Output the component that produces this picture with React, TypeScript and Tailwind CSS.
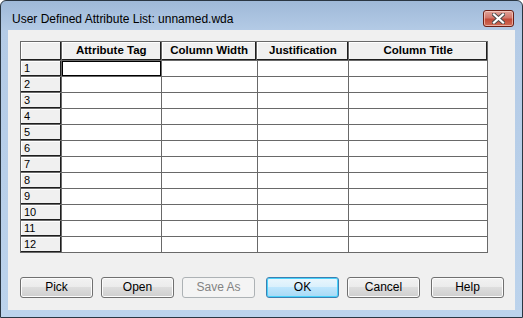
import React from 'react';

const cols = [
  { title: '', w: 'w-[41px]' },
  { title: 'Attribute Tag', w: 'w-[100px]' },
  { title: 'Column Width', w: 'w-[96px]' },
  { title: 'Justification', w: 'w-[92px]' },
  { title: 'Column Title', w: 'w-[139px]' },
];

const rows = Array.from({ length: 12 }, (_, i) => i + 1);

const Button: React.FC<{ label: string; kind?: 'normal' | 'default' | 'disabled' }> = ({ label, kind = 'normal' }) => {
  const styles = {
    normal:
      'border-[#707070] bg-[linear-gradient(#f2f2f2_0%,#ebebeb_50%,#dddddd_50%,#cfcfcf_100%)] text-black shadow-[inset_0_0_0_1px_#fcfcfc]',
    default:
      'border-[#3c7fb1] bg-[linear-gradient(#eaf6fd_0%,#d9f0fc_50%,#bee6fd_50%,#a7d9f5_100%)] text-black shadow-[inset_0_0_0_1px_#48d2fb]',
    disabled: 'border-[#adb2b5] bg-[#f4f4f4] text-[#838383]',
  }[kind];
  return (
    <div
      className={`w-[73px] h-[21px] rounded-[3px] border flex items-center justify-center pb-[2px] text-[12px] leading-none ${styles}`}
    >
      {label}
    </div>
  );
};

const App: React.FC = () => {
  return (
    <div className="w-[523px] h-[318px] font-['Liberation_Sans',Arial,sans-serif] bg-white">
      <div className="w-full h-full rounded-t-[6px] border border-[#2a3642] bg-[linear-gradient(#9fb9d8_0px,#b4cbe6_30px,#bcd3ec_100%)] px-[7px] pb-[7px] flex flex-col">
        {/* Title bar */}
        <div className="h-[29px] flex items-start justify-between shrink-0">
          <div className="pl-[4px] pt-[12px] text-[12px] leading-none text-black">
            User Defined Attribute List: unnamed.wda
          </div>
          <div className="mt-[9px] mr-[1px] w-[31px] h-[17px] rounded-[3px] border border-[#6b1f15] bg-[linear-gradient(#e0a49a_0%,#d2776b_45%,#c24a38_55%,#cf6d57_100%)] shadow-[inset_0_0_0_1px_rgba(255,220,210,0.6)] flex items-center justify-center">
            <svg width="13" height="11" viewBox="0 0 13 11">
              <path d="M2 1.5 L11 9.5 M11 1.5 L2 9.5" stroke="#4a4a4a" strokeWidth="4" strokeLinecap="square" />
              <path d="M2 1.5 L11 9.5 M11 1.5 L2 9.5" stroke="#ffffff" strokeWidth="2.2" strokeLinecap="square" />
            </svg>
          </div>
        </div>

        {/* Client area */}
        <div className="flex-1 bg-[#f0f0f0] pl-[12px] pt-[11px] flex flex-col">
          <div className="w-[468px] border-l border-t border-[#696969]">
            {/* Header */}
            <div className="flex h-[19px]">
              {cols.map((c, i) => (
                <div
                  key={i}
                  className={`${c.w} h-full border-r border-b border-[#696969] bg-[#f0f0f0] shadow-[inset_-1px_-1px_0_#1e1e1e,inset_1px_1px_0_#ffffff] flex items-center justify-center text-[11.5px] font-bold text-black leading-none pb-[1px]`}
                >
                  {c.title}
                </div>
              ))}
            </div>
            {rows.map((r) => (
              <div key={r} className="flex h-[16px]">
                <div className="w-[41px] h-full border-r border-b border-[#696969] bg-[#f0f0f0] shadow-[inset_-1px_-1px_0_#1e1e1e,inset_1px_1px_0_#ffffff] flex items-center pl-[3px] text-[11px] leading-none text-black">
                  {r}
                </div>
                {cols.slice(1).map((c, i) => (
                  <div
                    key={i}
                    className={`${c.w} h-full border-r border-b border-[#696969] bg-white ${
                      r === 1 && i === 0 ? 'shadow-[inset_0_0_0_1px_#000000]' : ''
                    }`}
                  />
                ))}
              </div>
            ))}
          </div>

          {/* Buttons */}
          <div className="mt-[24px] flex">
            <Button label="Pick" />
            <div className="ml-[8px]">
              <Button label="Open" />
            </div>
            <div className="ml-[8px]">
              <Button label="Save As" kind="disabled" />
            </div>
            <div className="ml-[11px]">
              <Button label="OK" kind="default" />
            </div>
            <div className="ml-[8px]">
              <Button label="Cancel" />
            </div>
            <div className="ml-[11px]">
              <Button label="Help" />
            </div>
          </div>
        </div>
      </div>
    </div>
  );
};

export default App;
